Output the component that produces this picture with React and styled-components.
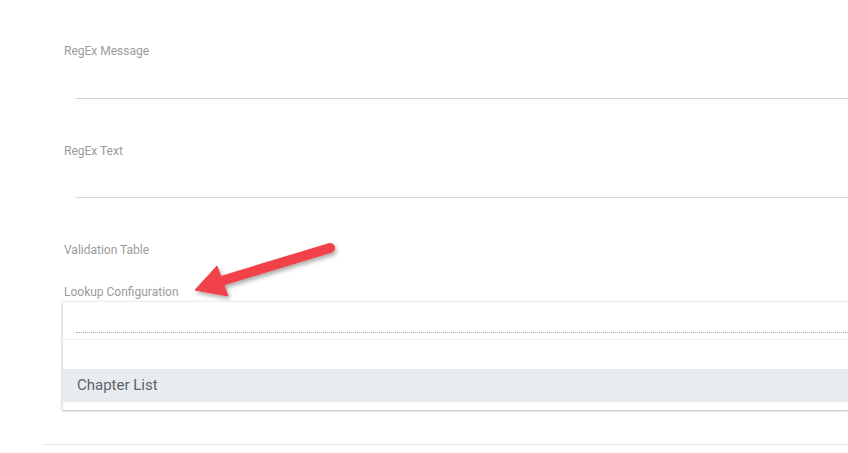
import React from "react";
import styled, { createGlobalStyle } from "styled-components";

const GlobalStyle = createGlobalStyle`
  html, body {
    margin: 0;
    padding: 0;
    background: #ffffff;
    overflow: hidden;
  }
  body {
    font-family: Roboto, "Liberation Sans", Arial, sans-serif;
  }
`;

const Page = styled.div`
  position: relative;
  width: 848px;
  height: 453px;
  padding: 44px 0 0 64px;
  box-sizing: border-box;
  overflow: hidden;
`;

const Field = styled.div`
  margin-bottom: ${(p) => p.gap || 0}px;
`;

const Label = styled.div`
  font-size: 12px;
  line-height: 14px;
  color: #9b9b9b;
  white-space: nowrap;
`;

const TextInput = styled.div`
  margin-left: 12px;
  height: ${(p) => p.h || 40}px;
  border-bottom: 1px solid ${(p) => (p.focused ? "#c9d5e1" : "#d4d7da")};
`;

const Combo = styled.div`
  margin: 2px 0 0 -2px;
  border-top: 1px solid #efefef;
  border-left: 1px solid #e4e4e4;
  background: #fff;
  box-shadow: 0 1px 2px rgba(0, 0, 0, 0.28);
`;

const ComboInput = styled.div`
  height: 37px;
  padding-left: 13px;
  display: flex;
  align-items: flex-end;
  border-bottom: 1px solid #efefef;
`;

const DottedLine = styled.div`
  flex: 1;
  margin-bottom: 6px;
  border-bottom: 1px dotted #a8a8a8;
`;

const Menu = styled.div`
  padding: 29px 0 8px;
`;

const MenuItem = styled.div`
  height: 33px;
  line-height: 33px;
  padding-left: 14px;
  background: ${(p) => (p.active ? "#e9ecef" : "transparent")};
  color: #58646d;
  font-size: 15px;
`;

const Separator = styled.div`
  margin: 34px 0 0 -21px;
  border-top: 1px solid #e6e6e6;
`;

const ArrowLayer = styled.svg`
  position: absolute;
  left: 0;
  top: 0;
  pointer-events: none;
`;

function Arrow() {
  return (
    <ArrowLayer width="848" height="453" viewBox="0 0 848 453">
      <defs>
        <filter id="arrowShadow" x="-20%" y="-40%" width="140%" height="180%">
          <feDropShadow dx="1.5" dy="2.5" stdDeviation="2" floodColor="#000" floodOpacity="0.35" />
        </filter>
      </defs>
      <g filter="url(#arrowShadow)" fill="#f2424a" stroke="#f2424a">
        <line x1="330" y1="248" x2="218" y2="282" strokeWidth="10" strokeLinecap="round" />
        <polygon points="195,290 217,266 228,296" strokeWidth="1" strokeLinejoin="round" />
      </g>
    </ArrowLayer>
  );
}

export default function App() {
  return (
    <>
      <GlobalStyle />
      <Page>
        <Field gap={45}>
          <Label>RegEx Message</Label>
          <TextInput focused />
        </Field>
        <Field gap={45}>
          <Label>RegEx Text</Label>
          <TextInput h={39} />
        </Field>
        <Field gap={28}>
          <Label>Validation Table</Label>
        </Field>
        <Field>
          <Label>Lookup Configuration</Label>
          <Combo>
            <ComboInput>
              <DottedLine />
            </ComboInput>
            <Menu>
              <MenuItem active>Chapter List</MenuItem>
            </Menu>
          </Combo>
        </Field>
        <Separator />
        <Arrow />
      </Page>
    </>
  );
}
